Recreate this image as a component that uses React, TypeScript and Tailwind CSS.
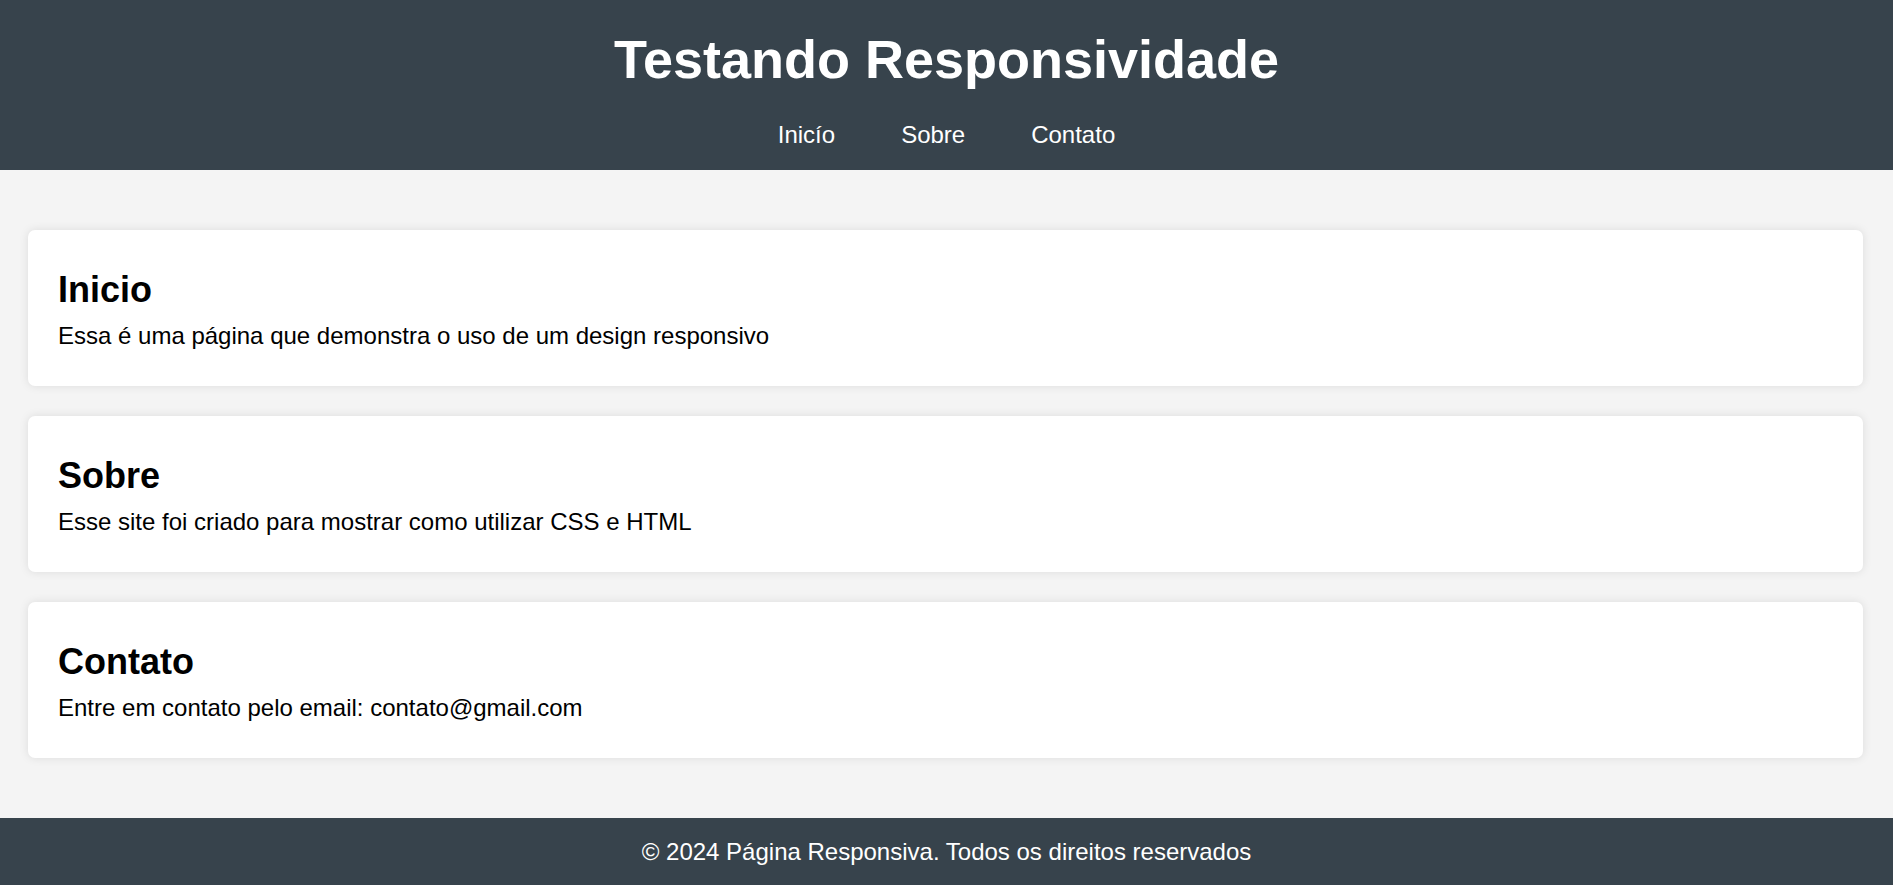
import React from 'react';

const sections = [
  { id: 'inicio', title: 'Inicio', text: 'Essa é uma página que demonstra o uso de um design responsivo' },
  { id: 'sobre', title: 'Sobre', text: 'Esse site foi criado para mostrar como utilizar CSS e HTML' },
  { id: 'contato', title: 'Contato', text: 'Entre em contato pelo email: contato@gmail.com' },
];

const App = () => {
  return (
    <div className="min-h-screen flex flex-col bg-[#f4f4f4] text-black font-['Liberation_Sans',Arial,sans-serif]">
      {/* Header */}
      <header className="bg-[#37434c] text-white text-center pt-[28px] pb-[21px]">
        <h1 className="text-[54px] leading-[62px] font-bold">Testando Responsividade</h1>
        <nav className="mt-[31px]">
          <ul className="flex justify-center gap-[66px] text-[24px] leading-[28px]">
            <li><a href="#inicio">Inicío</a></li>
            <li><a href="#sobre">Sobre</a></li>
            <li><a href="#contato">Contato</a></li>
          </ul>
        </nav>
      </header>

      {/* Sections */}
      <main className="flex-1 flex flex-col gap-[30px] pt-[60px] pb-[60px] pl-[28px] pr-[30px]">
        {sections.map((s) => (
          <section
            key={s.id}
            id={s.id}
            className="bg-white rounded-[7px] shadow-[0_0_10px_rgba(0,0,0,0.1)] px-[30px] pt-[39px] pb-[36px]"
          >
            <h2 className="text-[36px] leading-[41px] font-bold">{s.title}</h2>
            <p className="mt-[12px] text-[24px] leading-[28px]">{s.text}</p>
          </section>
        ))}
      </main>

      {/* Footer */}
      <footer className="bg-[#37434c] text-white text-center py-[20px] text-[24px] leading-[27px]">
        © 2024 Página Responsiva. Todos os direitos reservados
      </footer>
    </div>
  );
};

export default App;
